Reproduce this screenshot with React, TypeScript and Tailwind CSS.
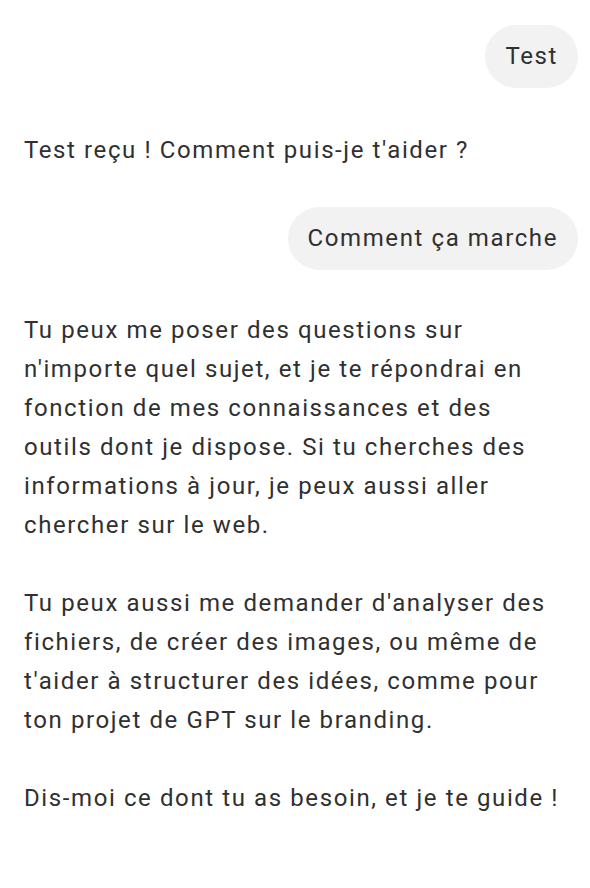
export default function App() {
  return (
    <div className="min-h-[888px] bg-white font-['Roboto',sans-serif] text-[24px] leading-[39px] tracking-[1.6px] text-[#303030]">
      <div className="flex flex-col pt-[25px] pl-6 pr-3">
        <div className="flex justify-end">
          <div className="rounded-full bg-[#f2f2f2] px-5 py-3">Test</div>
        </div>
        <p className="mt-[43px]">Test reçu ! Comment puis-je t'aider ?</p>
        <div className="mt-[37px] flex justify-end">
          <div className="rounded-full bg-[#f2f2f2] px-5 py-3">Comment ça marche</div>
        </div>
        <div className="mt-[41px] flex flex-col gap-[39px] pr-4">
          <p>
            Tu peux me poser des questions sur n'importe quel sujet, et je te répondrai en fonction de mes
            connaissances et des outils dont je dispose. Si tu cherches des informations à jour, je peux aussi
            aller chercher sur le web.
          </p>
          <p>
            Tu peux aussi me demander d'analyser des fichiers, de créer des images, ou même de t'aider à
            structurer des idées, comme pour ton projet de GPT sur le branding.
          </p>
          <p>Dis-moi ce dont tu as besoin, et je te guide !</p>
        </div>
      </div>
    </div>
  );
}
